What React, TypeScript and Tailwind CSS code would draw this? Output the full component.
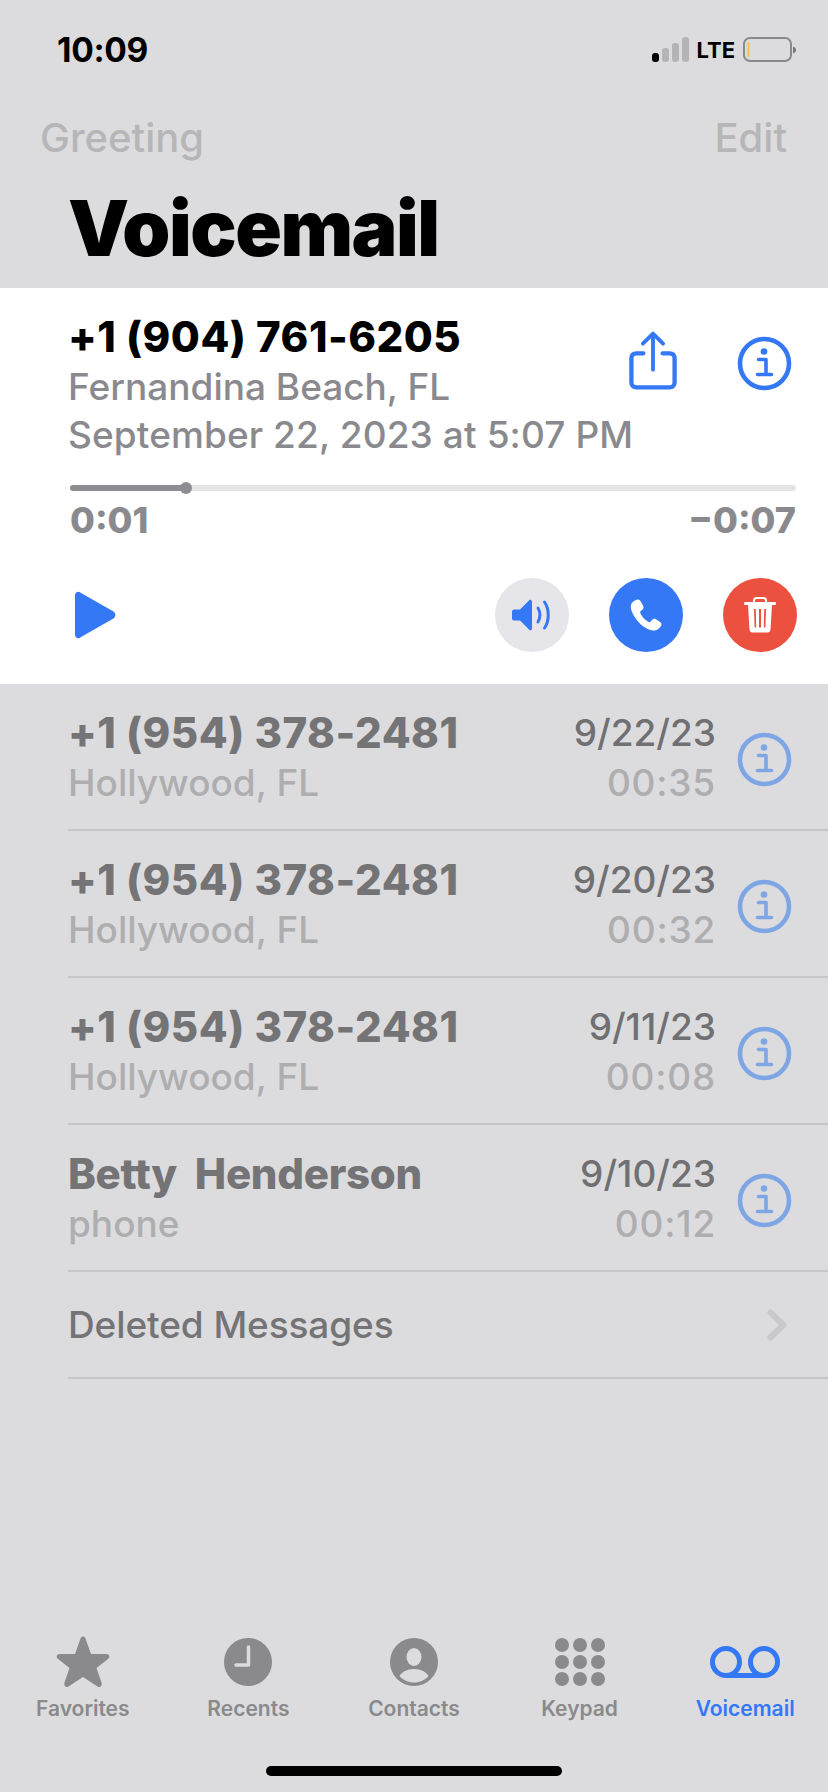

import React from "react";

const Info = ({ color, size = 55 }: { color: string; size?: number }) => (
  <svg width={size} height={size} viewBox="0 0 55 55" fill="none" className="block">
    <circle cx="27.5" cy="27.5" r="24.5" stroke={color} strokeWidth="4.6" />
    <circle cx="27" cy="15.5" r="3.3" fill={color} />
    <path d="M21.5 23.5H29V38M20.5 38.5H34.5" stroke={color} strokeWidth="3.6" strokeLinecap="round" strokeLinejoin="round" />
  </svg>
);

const Row = ({ name, sub, date, dur, track }: { name: string; sub: string; date: string; dur: string; track: string }) => (
  <div className="ml-[68px] h-[147px] border-b-2 border-[#c6c6c8] flex items-center pr-[36px]">
    <div className="flex-1 min-w-0 mt-[2px]">
      <div className={`text-[42px] leading-[50px] font-extrabold text-[#747476] whitespace-pre ${track}`}>{name}</div>
      <div className="text-[37px] leading-[50px] font-[450] text-[#aeaeb0]">{sub}</div>
    </div>
    <div className="text-right mr-[21px] mt-[2px]">
      <div className="text-[37px] leading-[50px] font-[450] text-[#707073]">{date}</div>
      <div className="text-[37px] leading-[50px] font-[450] text-[#aeaeb0] tracking-[0.8px]">{dur}</div>
    </div>
    <div className="mt-[5px]"><Info color="#7fa6e4" /></div>
  </div>
);

const Tab = ({ label, active, children }: { label: string; active?: boolean; children: React.ReactNode }) => (
  <div className="flex flex-col items-center">
    <div className="h-[54px] flex items-center justify-center">{children}</div>
    <div className={`mt-[6px] text-[21px] leading-[28px] font-semibold ${active ? "text-[#3478f6]" : "text-[#8a8a8c]"}`}>{label}</div>
  </div>
);

export default function App() {
  return (
    <div className="w-[828px] h-[1792px] bg-[#dcdcde] flex flex-col overflow-hidden font-['Inter',sans-serif]">
      {/* status bar */}
      <div className="h-[100px] flex items-center justify-between pl-[57px] pr-[31px]">
        <div className="text-[33.500px] font-bold text-black tracking-[-0.3px]">10:09</div>
        <div className="flex items-center">
          <svg width="38" height="26" viewBox="0 0 38 26" className="block">
            <rect x="0" y="16" width="7" height="9" rx="3" fill="#000" />
            <rect x="10" y="11" width="7" height="14" rx="3" fill="#b4b4b6" />
            <rect x="20" y="6" width="7" height="19" rx="3" fill="#b4b4b6" />
            <rect x="30" y="0" width="7" height="25" rx="3" fill="#b4b4b6" />
          </svg>
          <div className="text-[22px] font-bold text-black ml-[7px]">LTE</div>
          <svg width="54" height="26" viewBox="0 0 54 26" className="ml-[8px] block">
            <rect x="1" y="1" width="47" height="23" rx="6" fill="none" stroke="#89898b" strokeWidth="2" />
            <rect x="4.5" y="5" width="2" height="15" rx="1" fill="#f5c33b" />
            <path d="M50 9.5c2.5.8 3 2 3 3.5s-.5 2.7-3 3.5z" fill="#77777a" />
          </svg>
        </div>
      </div>
      {/* nav */}
      <div className="h-[60px] mt-[8px] flex items-center justify-between pl-[40px] pr-[41px] text-[40px] font-medium text-[#b6b6b8]">
        <span>Greeting</span>
        <span>Edit</span>
      </div>
      {/* title */}
      <div className="h-[128px] -mt-[8px] pl-[68px] flex items-center text-[77px] font-black text-black tracking-[-1.5px] leading-none pt-[8px]">Voicemail</div>
      {/* expanded */}
      <div className="h-[396px] bg-white pl-[70px] pr-[32px] pt-[24px]">
        <div className="flex justify-between">
          <div className="-ml-[2px] flex-1 min-w-0 whitespace-nowrap">
            <div className="text-[42px] leading-[50px] font-extrabold text-black tracking-[0.5px]">+1 (904) 761-6205</div>
            <div className="text-[37px] leading-[47px] font-[450] text-[#8a8a8e] mt-[1px]">Fernandina Beach, FL</div>
            <div className="text-[37px] leading-[47px] font-[450] text-[#8a8a8e] mt-[1px] tracking-[0.1px]">September 22, 2023 at 5:07 PM</div>
          </div>
          <div className="flex items-start shrink-0 pt-[18px] pr-[4px]">
            <svg width="48" height="62" viewBox="0 0 50 62" fill="none" className="block mr-[60px]">
              <path d="M15 23H7.5C4.5 23 2.5 25 2.5 28V53.5C2.5 56.5 4.5 58.5 7.5 58.5H42.5C45.500 58.5 47.500 56.5 47.500 53.5V28C47.500 25 45.5 23 42.5 23H35" stroke="#3478f6" strokeWidth="4.500" strokeLinecap="round" />
              <path d="M25 40V3M14.500 13L25 2.500L35.500 13" stroke="#3478f6" strokeWidth="4" strokeLinecap="round" strokeLinejoin="round" />
            </svg>
            <div className="mt-[6px]"><Info color="#3478f6" /></div>
          </div>
        </div>
        {/* slider */}
        <div className="relative h-[6px] mt-[27px] rounded-full bg-[#e5e5e6]">
          <div className="h-[6px] w-[116px] rounded-full bg-[#8e8e92]" />
          <div className="absolute left-[110px] top-[-3px] w-[12px] h-[12px] rounded-full bg-[#8e8e92]" />
        </div>
        <div className="flex justify-between mt-[11px] text-[36px] leading-[36px] font-extrabold text-[#8a8a8e]">
          <span>0:01</span>
          <span>−0:07</span>
        </div>
        {/* controls */}
        <div className="flex items-center mt-[40px]">
          <svg width="42" height="48" viewBox="0 0 42 48" className="block ml-[4px]">
            <path d="M1 4.500C1 .8 4.500-.5 7 2L39.500 20.500C42 22.500 42 25.500 39.500 27.500L7 46C4.500 48.500 1 47 1 43.500Z" fill="#3478f6" />
          </svg>
          <div className="flex-1" />
          <div className="w-[74px] h-[74px] rounded-full bg-[#e5e5ea] flex items-center justify-center mr-[40px]">
            <svg width="40" height="32" viewBox="0 0 40 32" fill="none">
              <path d="M2 10.500H8L16 2.500C18-.5 20 .5 20 3V29C20 31.500 18 32.500 16 29.500L8 21.500H2C1 21.500 0 20.500 0 19.500V12.500C0 11.500 1 10.500 2 10.500Z" fill="#3478f6" />
              <path d="M26 9C28.500 13 28.500 19 26 23M32.500 3C37.500 10 37.500 22 32.500 29" stroke="#3478f6" strokeWidth="3" strokeLinecap="round" />
            </svg>
          </div>
          <div className="w-[74px] h-[74px] rounded-full bg-[#3478f6] flex items-center justify-center mr-[40px]">
            <svg width="32" height="32" viewBox="0 0 32 32">
              <path d="M5.500 1.200C7.500-.2 9.500.3 10.500 2L13 6.500C14 8.500 13.500 10 12 11L10.500 12.200C10 12.800 10 13.500 10.500 14.500C12.500 18.300 15 21 18.500 23C19.500 23.500 20 23.300 20.500 22.800L22 21C23.300 19.700 24.500 19.500 26 20.300L30 23C31.800 24.200 32 26 30.500 27.800C28.500 30.500 26 32 23 31.500C16 30.500 9.500 25.500 5 18.500C1.500 13 0 8.500 1.200 5.200C1.800 3.500 3.500 2.200 5.500 1.200Z" fill="#fff" />
            </svg>
          </div>
          <div className="w-[74px] h-[74px] rounded-full bg-[#ec503f] flex items-center justify-center -mr-[1px]">
            <svg width="32" height="36" viewBox="0 0 32 36" fill="none">
              <path d="M0 6.500C0 5.500 .5 5 1.500 5H30.500C31.500 5 32 5.500 32 6.500S31.500 8 30.500 8H1.500C.5 8 0 7.500 0 6.500Z" fill="#fff" />
              <path d="M10 5V3.500C10 1.800 11 1 12.500 1H19.500C21 1 22 1.800 22 3.500V5" stroke="#fff" strokeWidth="2" />
              <path fillRule="evenodd" clipRule="evenodd" d="M4 8H28L26.500 32.500C26.400 34.500 25 35.500 23.500 35.500H8.500C7 35.500 5.600 34.500 5.500 32.500ZM10 12L10.600 30.500H12.200L11.800 12ZM15 12V30.500H17V12ZM20.200 12L19.800 30.500H21.400L22 12Z" fill="#fff" />
            </svg>
          </div>
        </div>
      </div>
      {/* list */}
      <Row track="tracking-[0.5px]" name="+1 (954) 378-2481" sub="Hollywood, FL" date="9/22/23" dur="00:35" />
      <Row track="tracking-[0.5px]" name="+1 (954) 378-2481" sub="Hollywood, FL" date="9/20/23" dur="00:32" />
      <Row track="tracking-[0.5px]" name="+1 (954) 378-2481" sub="Hollywood, FL" date="9/11/23" dur="00:08" />
      <Row track="tracking-[-0.3px]" name="Betty  Henderson" sub="phone" date="9/10/23" dur="00:12" />
      <div className="ml-[68px] h-[107px] border-b-2 border-[#c6c6c8] flex items-center justify-between pr-[41px]">
        <span className="text-[37px] font-medium text-[#747476] tracking-[-0.1px]">Deleted Messages</span>
        <svg width="20" height="32" viewBox="0 0 20 32" fill="none">
          <path d="M3.500 3.500L16.500 16L3.500 28.500" stroke="#c9c9cb" strokeWidth="6" strokeLinecap="round" strokeLinejoin="round" />
        </svg>
      </div>
      {/* tabs */}
      <div className="mt-auto grid grid-cols-5">
        <Tab label="Favorites">
          <svg width="54" height="52" viewBox="0 0 54 52">
            <path d="M27 0.500C28.500 .5 29.500 2 30 4L35 18H50C53 18 54.500 20.500 52.500 22.500L40.500 32L45.500 46.500C46.500 50 44 52 41.500 50.500L27 41L12.500 50.500C10 52 7.500 50 8.500 46.500L13.500 32L1.500 22.500C-.5 20.500 1 18 4 18H19L24 4C24.500 2 25.500 .5 27 .5Z" fill="#8a8a8c" />
          </svg>
        </Tab>
        <Tab label="Recents">
          <svg width="48" height="48" viewBox="0 0 48 48">
            <circle cx="24" cy="24" r="24" fill="#8a8a8c" />
            <path d="M24.500 9V27H12" stroke="#dcdcde" strokeWidth="3.500" fill="none" strokeLinecap="round" strokeLinejoin="round" />
          </svg>
        </Tab>
        <Tab label="Contacts">
          <svg width="48" height="48" viewBox="0 0 48 48">
            <circle cx="24" cy="24" r="24" fill="#8a8a8c" />
            <ellipse cx="24" cy="19" rx="7.500" ry="9" fill="#dcdcde" />
            <path d="M9.500 38C12 34 17 31 24 31S36 34 38.500 38C35 42 30 44.500 24 44.500S13 42 9.500 38Z" fill="#dcdcde" />
          </svg>
        </Tab>
        <Tab label="Keypad">
          <svg width="50" height="48" viewBox="0 0 50 48" fill="#8a8a8c">
            <circle cx="7" cy="7" r="7" /><circle cx="25" cy="7" r="7" /><circle cx="43" cy="7" r="7" />
            <circle cx="7" cy="24" r="7" /><circle cx="25" cy="24" r="7" /><circle cx="43" cy="24" r="7" />
            <circle cx="7" cy="41" r="7" /><circle cx="25" cy="41" r="7" /><circle cx="43" cy="41" r="7" />
          </svg>
        </Tab>
        <Tab label="Voicemail" active>
          <svg width="70" height="32" viewBox="0 0 70 32" fill="none">
            <path d="M17 29.500H53" stroke="#3478f6" strokeWidth="5" />
            <circle cx="16" cy="16" r="13.500" stroke="#3478f6" strokeWidth="5" />
            <circle cx="54" cy="16" r="13.500" stroke="#3478f6" strokeWidth="5" />
          </svg>
        </Tab>
      </div>
      <div className="flex justify-center pt-[43px] pb-[16px]">
        <div className="w-[296px] h-[10px] rounded-full bg-black" />
      </div>
    </div>
  );
}
